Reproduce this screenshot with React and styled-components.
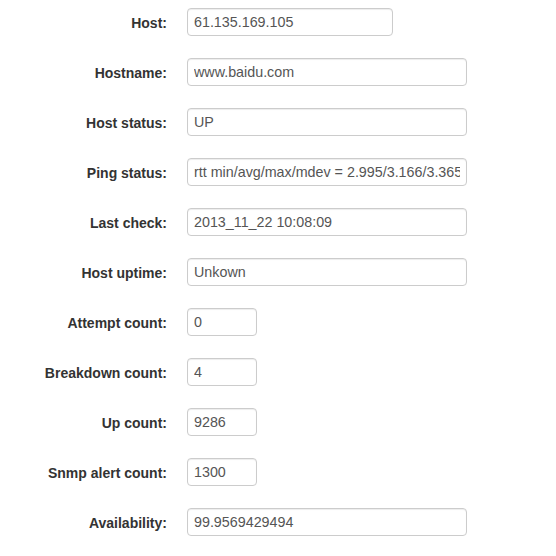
import React from "react";
import styled, { createGlobalStyle } from "styled-components";

const rows = [
  { label: "Host", value: "61.135.169.105", size: "medium" },
  { label: "Hostname", value: "www.baidu.com", size: "large" },
  { label: "Host status", value: "UP", size: "large" },
  { label: "Ping status", value: "rtt min/avg/max/mdev = 2.995/3.166/3.365/0.152 ms", size: "large" },
  { label: "Last check", value: "2013_11_22 10:08:09", size: "large" },
  { label: "Host uptime", value: "Unkown", size: "large" },
  { label: "Attempt count", value: "0", size: "small" },
  { label: "Breakdown count", value: "4", size: "small" },
  { label: "Up count", value: "9286", size: "small" },
  { label: "Snmp alert count", value: "1300", size: "small" },
  { label: "Availability", value: "99.9569429494", size: "large" },
];

const widths = { small: 70, medium: 206, large: 280 };

export default function App() {
  return (
    <>
      <GlobalStyle />
      <Form>
        {rows.map((row) => (
          <ControlGroup key={row.label}>
            <Label>{row.label}:</Label>
            <Input $width={widths[row.size]} defaultValue={row.value} readOnly />
          </ControlGroup>
        ))}
      </Form>
    </>
  );
}

const GlobalStyle = createGlobalStyle`
  html, body {
    margin: 0;
    background: #fff;
  }
  body {
    font-family: "Liberation Sans", Arial, sans-serif;
    color: #333;
  }
`;

const Form = styled.form`
  display: flex;
  flex-direction: column;
  gap: 22px;
  padding: 8px 0 0 7px;
`;

const ControlGroup = styled.div`
  display: flex;
  align-items: center;
  gap: 20px;
`;

const Label = styled.label`
  width: 160px;
  text-align: right;
  font-size: 14px;
  font-weight: bold;
  color: #333;
  padding-top: 1px;
`;

const Input = styled.input`
  box-sizing: border-box;
  width: ${(p) => p.$width}px;
  height: 28px;
  padding: 0 6px;
  border: 1px solid #ccc;
  border-radius: 4px;
  box-shadow: inset 0 1px 1px rgba(0, 0, 0, 0.075);
  font-family: "Liberation Sans", Arial, sans-serif;
  font-size: 14.3px;
  color: #555;
  background: #fff;
  outline: none;
`;
